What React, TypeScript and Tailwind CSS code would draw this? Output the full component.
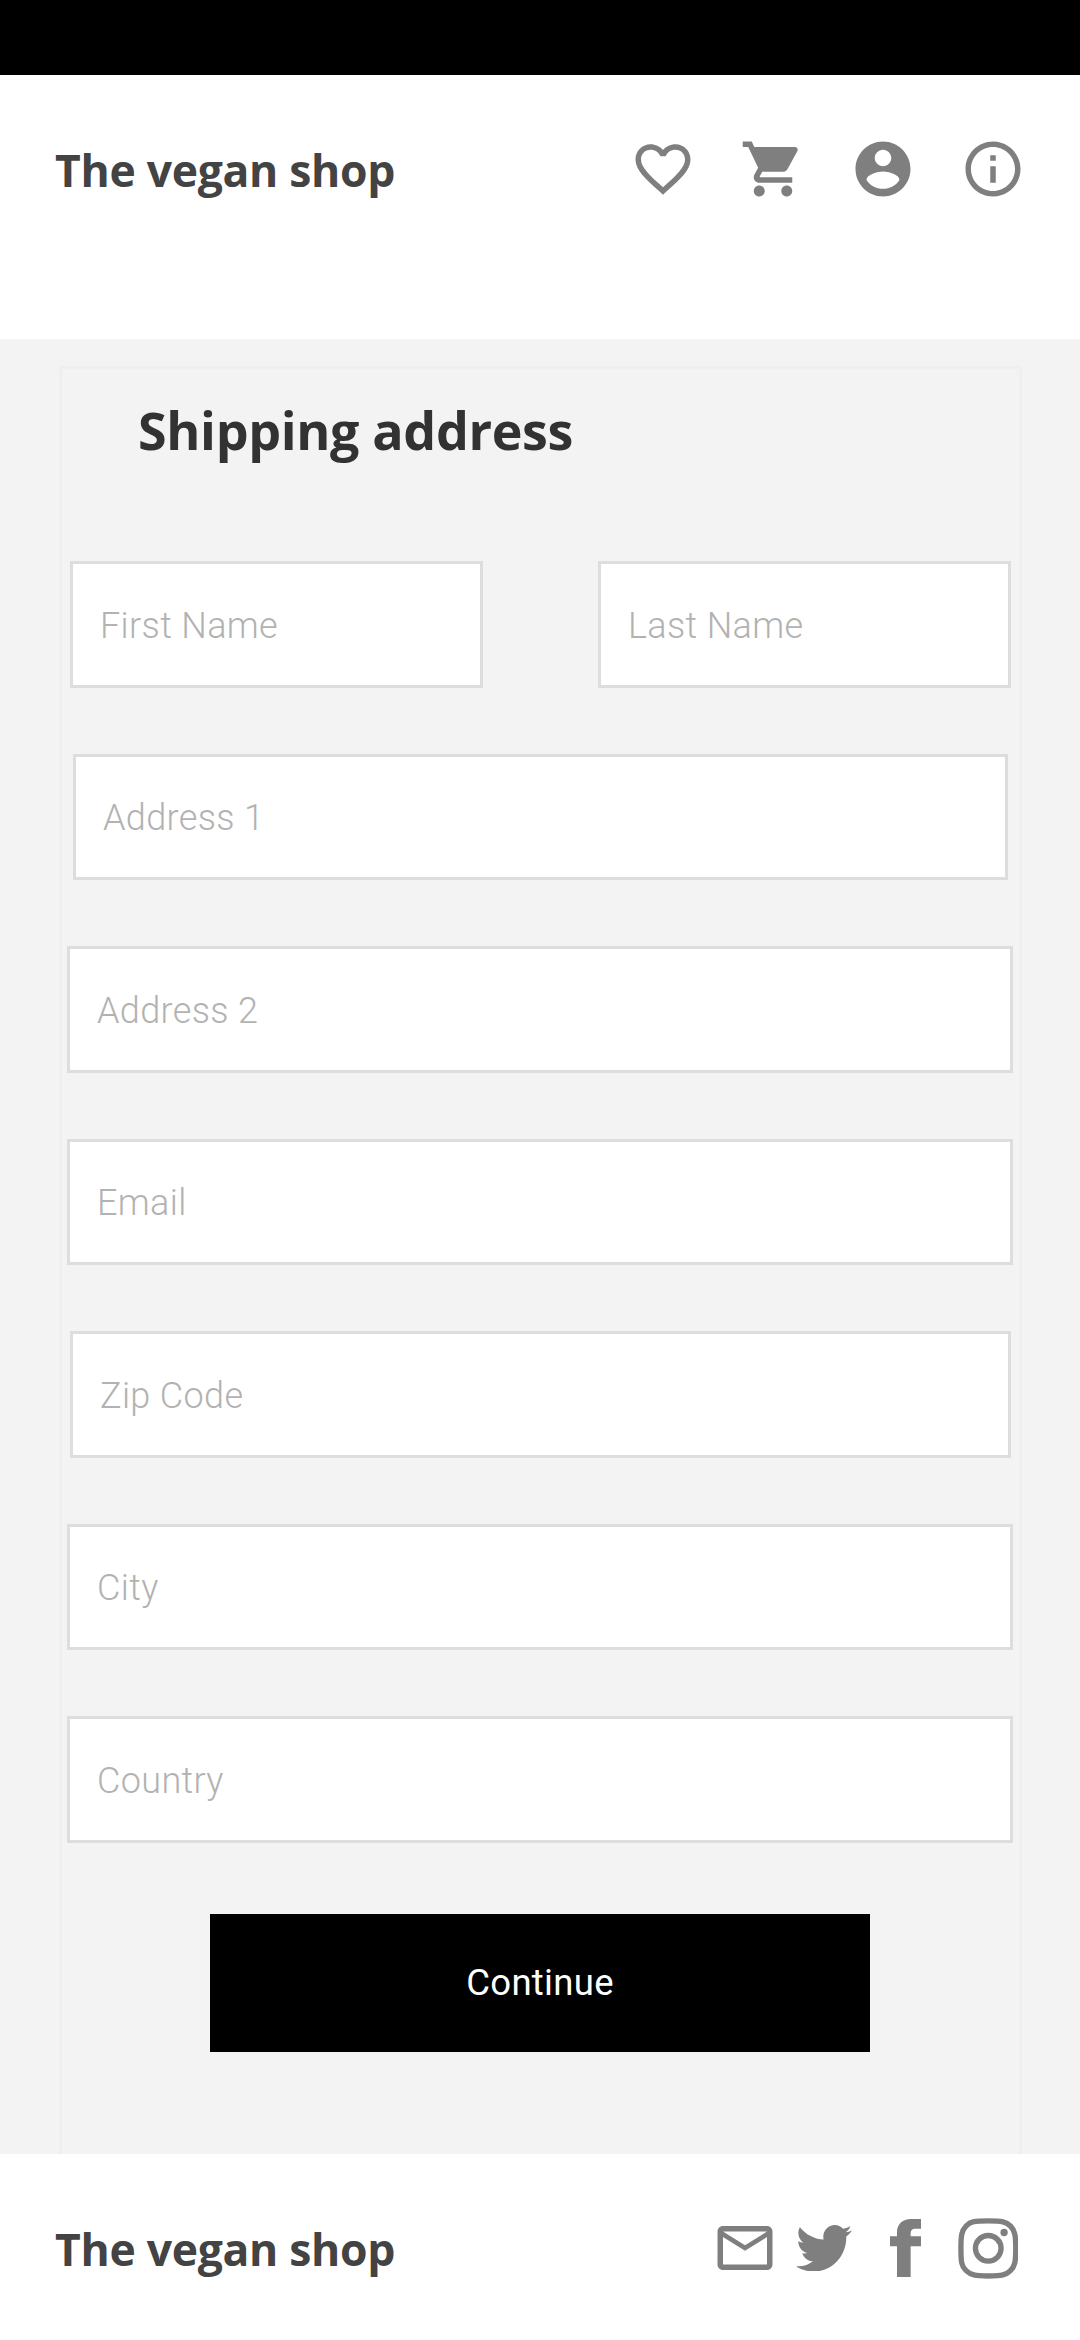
import type { ReactNode } from "react";

function Icon({ children }: { children: ReactNode }) {
  return (
    <svg viewBox="0 0 24 24" className="size-[66px]" fill="currentColor">
      {children}
    </svg>
  );
}

function Brand() {
  return (
    <span className="font-['Open_Sans',sans-serif] text-[44.5px] leading-[62px] font-bold tracking-[-0.3px] whitespace-nowrap text-[#434343]">
      The vegan shop
    </span>
  );
}

function Field({ label, className }: { label: string; className: string }) {
  return (
    <input
      type="text"
      placeholder={label}
      aria-label={label}
      className={`block border-[3px] border-[#dddddd] bg-white px-[27px] pt-[2px] text-[36px] font-light tracking-[0.36px] text-[#333333] placeholder:text-[#b2b2b2] placeholder:opacity-100 ${className}`}
    />
  );
}

function Header() {
  return (
    <header className="flex h-[264px] items-start justify-between bg-white pt-[60px] pr-[54px] pl-[55px]">
      <div className="pt-[4px]">
        <Brand />
      </div>
      <nav className="flex gap-[44px] pt-[0.5px] text-[#7f7f7f]">
        <Icon>
          <path d="M16.5 3c-1.74 0-3.41.81-4.5 2.09C10.91 3.81 9.24 3 7.5 3 4.42 3 2 5.42 2 8.5c0 3.78 3.4 6.86 8.55 11.54L12 21.35l1.45-1.32C18.6 15.36 22 12.28 22 8.5 22 5.42 19.58 3 16.5 3zm-4.4 15.55l-.1.1-.1-.1C7.14 14.24 4 11.39 4 8.5 4 6.5 5.5 5 7.5 5c1.54 0 3.04.99 3.57 2.36h1.87C13.46 5.99 14.96 5 16.5 5c2 0 3.5 1.5 3.5 3.5 0 2.89-3.14 5.74-7.9 10.05z" />
        </Icon>
        <Icon>
          <path d="M7 18c-1.1 0-1.99.9-1.99 2S5.9 22 7 22s2-.9 2-2-.9-2-2-2zM1 2v2h2l3.6 7.59-1.35 2.45c-.16.28-.25.61-.25.96 0 1.1.9 2 2 2h12v-2H7.42c-.14 0-.25-.11-.25-.25l.03-.12.9-1.63h7.45c.75 0 1.41-.41 1.75-1.03l3.58-6.49c.08-.14.12-.31.12-.48 0-.55-.45-1-1-1H5.21l-.94-2H1zm16 16c-1.1 0-1.99.9-1.99 2s.89 2 1.99 2 2-.9 2-2-.9-2-2-2z" />
        </Icon>
        <Icon>
          <path d="M12 2C6.48 2 2 6.48 2 12s4.48 10 10 10 10-4.48 10-10S17.52 2 12 2zm0 3c1.66 0 3 1.34 3 3s-1.34 3-3 3-3-1.34-3-3 1.34-3 3-3zm0 14.2c-2.5 0-4.71-1.28-6-3.22.03-1.99 4-3.08 6-3.08 1.99 0 5.97 1.09 6 3.08-1.29 1.94-3.5 3.22-6 3.22z" />
        </Icon>
        <Icon>
          <path d="M11 17h2v-6h-2v6zm1-15C6.48 2 2 6.48 2 12s4.48 10 10 10 10-4.48 10-10S17.52 2 12 2zm0 18c-4.41 0-8-3.59-8-8s3.59-8 8-8 8 3.59 8 8-3.59 8-8 8zM11 9h2V7h-2v2z" />
        </Icon>
      </nav>
    </header>
  );
}

function ShippingForm() {
  return (
    <main className="h-[1815px] bg-[#f3f3f3] pt-[27px] pr-[58px] pl-[59px]">
      <form className="h-[1788px] border-x-[3px] border-t-[3px] border-[#efefef]">
        <h1 className="pt-[25px] pl-[76px] font-['Open_Sans',sans-serif] text-[52px] leading-[72px] font-bold tracking-[-0.35px] text-[#323232]">
          Shipping address
        </h1>
        <div className="mt-[95px] flex flex-col gap-[66px]">
          <div className="flex justify-between px-[8px]">
            <Field label="First Name" className="h-[127px] w-[413px]" />
            <Field label="Last Name" className="h-[127px] w-[413px]" />
          </div>
          <Field label="Address 1" className="ml-[11px] h-[126px] w-[935px]" />
          <Field label="Address 2" className="ml-[5px] h-[127px] w-[946px]" />
          <Field label="Email" className="ml-[5px] h-[126px] w-[946px]" />
          <Field label="Zip Code" className="ml-[8px] h-[127px] w-[941px]" />
          <Field label="City" className="ml-[5px] h-[126px] w-[946px]" />
          <Field label="Country" className="ml-[5px] h-[127px] w-[946px]" />
        </div>
        <button
          type="button"
          className="mt-[71px] ml-[148px] block h-[138px] w-[660px] bg-black pt-[1px] text-[36.5px] tracking-[0.3px] text-white"
        >
          Continue
        </button>
      </form>
    </main>
  );
}

function Footer() {
  return (
    <footer className="flex h-[186px] items-start justify-between bg-white pt-[61px] pr-[62px] pl-[55px]">
      <div className="pt-[3px]">
        <Brand />
      </div>
      <div className="flex items-start text-[#7f7f7f]">
        <Icon>
          <path d="M20 4H4c-1.1 0-1.99.9-1.99 2L2 18c0 1.1.9 2 2 2h16c1.1 0 2-.9 2-2V6c0-1.1-.9-2-2-2zm0 14H4V8l8 5 8-5v10zm-8-7L4 6h16l-8 5z" />
        </Icon>
        <svg
          viewBox="0 48 512 416"
          preserveAspectRatio="none"
          className="mt-[9.5px] ml-[17.5px] h-[46.5px] w-[56px]"
          fill="currentColor"
        >
          <path d="M459.37 151.716c.325 4.548.325 9.097.325 13.645 0 138.72-105.583 298.558-298.558 298.558-59.452 0-114.68-17.219-161.137-47.106 8.447.974 16.568 1.299 25.34 1.299 49.055 0 94.213-16.568 130.274-44.832-46.132-.975-84.792-31.188-98.112-72.772 6.498.974 12.995 1.624 19.818 1.624 9.421 0 18.843-1.3 27.614-3.573-48.081-9.747-84.143-51.98-84.143-102.985v-1.299c13.969 7.797 30.214 12.67 47.431 13.319-28.264-18.843-46.781-51.005-46.781-87.391 0-19.492 5.197-37.36 14.294-52.954 51.655 63.675 129.3 105.258 216.365 109.807-1.624-7.797-2.599-15.918-2.599-24.04 0-57.828 46.782-104.934 104.934-104.934 30.213 0 57.502 12.67 76.67 33.137 23.715-4.548 46.456-13.32 66.599-25.34-7.798 24.366-24.366 44.833-46.132 57.827 21.117-2.273 41.584-8.122 60.426-16.243-14.292 20.791-32.161 39.308-52.628 54.253z" />
        </svg>
        <svg viewBox="0 0 93 175" className="mt-[3.7px] ml-[37.7px] h-[58.3px] w-[31px]" fill="currentColor">
          <path d="M93 0V29H76C66 29 62 34 62 43V52H93V82H62V175H21V82H0V52H21V40C21 15 38 0 63 0Z" />
        </svg>
        <svg
          viewBox="0 0 181 183"
          className="mt-[3px] ml-[37px] h-[61px] w-[60.5px]"
          fill="none"
          stroke="currentColor"
          strokeWidth="16"
        >
          <path d="M91 8.5C132 8.5 144 11 157 24S173 51 173 91.5S170 145 157 158S132 174 91 174S38 171 24 158S8.5 132 8.5 91.5S11 38 24 24S50 8.5 91 8.5Z" />
          <circle cx="90.5" cy="91" r="38.5" />
          <circle cx="138" cy="43.5" r="11" fill="currentColor" stroke="none" />
        </svg>
      </div>
    </footer>
  );
}

export default function App() {
  return (
    <div className="flex h-[2340px] w-[1080px] flex-col overflow-hidden bg-white font-['Roboto',sans-serif]">
      <div className="h-[75px] shrink-0 bg-black" />
      <Header />
      <ShippingForm />
      <Footer />
    </div>
  );
}
